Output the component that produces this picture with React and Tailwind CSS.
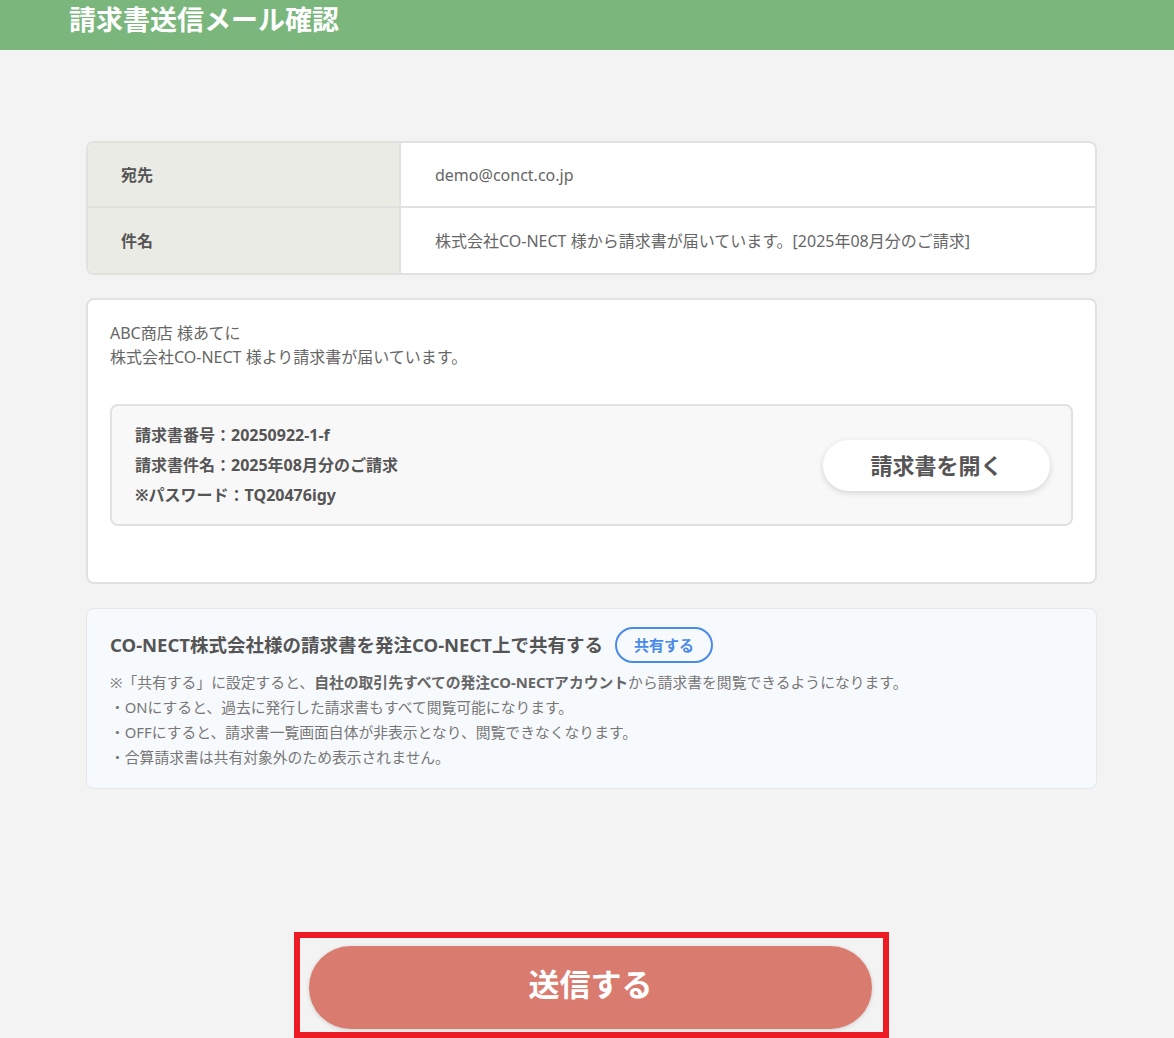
import React from "react";

const FONT = { fontFamily: '"Noto Sans", "Noto Sans CJK JP", sans-serif' };

const NOTES = [
  "・ONにすると、過去に発行した請求書もすべて閲覧可能になります。",
  "・OFFにすると、請求書一覧画面自体が非表示となり、閲覧できなくなります。",
  "・合算請求書は共有対象外のため表示されません。",
];

const App = () => {
  return (
    <div className="min-h-[1038px] bg-[#f2f3f2] text-[#666]" style={FONT}>
      {/* header */}
      <div className="h-[50px] bg-[#7bb77d] pl-[69px]">
        <h1 className="text-[27px] font-bold leading-[40px] text-white">請求書送信メール確認</h1>
      </div>

      <div className="flex flex-col pl-[86px] pr-[77px] pt-[91px]">
        {/* recipient table */}
        <div className="overflow-hidden rounded-lg border-2 border-[#dfe2df] bg-white">
          <div className="flex h-[65px] border-b-2 border-[#dfe2df]">
            <div className="flex w-[313px] items-center border-r-2 border-[#dfe2df] bg-[#ebebe6] pl-[33px] text-[16px] font-bold text-[#555]">
              宛先
            </div>
            <div className="flex items-center pl-[34px] text-[16px] text-[#666]">demo@conct.co.jp</div>
          </div>
          <div className="flex h-[65px]">
            <div className="flex w-[313px] items-center border-r-2 border-[#dfe2df] bg-[#ebebe6] pl-[33px] text-[16px] font-bold text-[#555]">
              件名
            </div>
            <div className="flex items-center pl-[34px] text-[16px] text-[#666]">
              株式会社CO-NECT 様から請求書が届いています。[2025年08月分のご請求]
            </div>
          </div>
        </div>

        {/* mail body */}
        <div className="mt-[23px] h-[286px] rounded-lg border-2 border-[#dfe2df] bg-white px-[22px] pt-[21px]">
          <p className="text-[16px] leading-[24px] text-[#666]">
            ABC商店 様あてに
            <br />
            株式会社CO-NECT 様より請求書が届いています。
          </p>
          <div className="mt-[35px] flex h-[122px] items-center justify-between rounded-lg border-2 border-[#dfe2df] bg-[#f8f8f8] pl-[23px] pr-[21px]">
            <div className="flex flex-col text-[16px] font-bold leading-[30px] text-[#555]">
              <span>請求書番号：20250922-1-f</span>
              <span>請求書件名：2025年08月分のご請求</span>
              <span>※パスワード：TQ20476igy</span>
            </div>
            <button className="h-[51px] w-[227px] rounded-full bg-white text-[22px] font-bold text-[#555] shadow-[0_2px_6px_rgba(0,0,0,0.15)]">
              請求書を開く
            </button>
          </div>
        </div>

        {/* share setting */}
        <div className="mt-[24px] h-[181px] rounded-lg border border-[#e4e8ea] bg-[#f7fafd] px-[23px] pt-[18px]">
          <div className="flex items-center gap-[12px]">
            <span className="text-[18.5px] font-bold text-[#555]">CO-NECT株式会社様の請求書を発注CO-NECT上で共有する</span>
            <span className="flex h-[36px] w-[98px] items-center justify-center rounded-full border-2 border-[#4a8ae8] text-[15px] font-bold text-[#4a8ae8]">
              共有する
            </span>
          </div>
          <div className="mt-[7px] flex flex-col text-[14.8px] leading-[25px] text-[#777]">
            <p>
              ※「共有する」に設定すると、<span className="font-bold text-[#666]">自社の取引先すべての発注CO-NECTアカウント</span>
              から請求書を閲覧できるようになります。
            </p>
            {NOTES.map((n) => (
              <p key={n}>{n}</p>
            ))}
          </div>
        </div>

        {/* submit */}
        <div className="mt-[143px] flex justify-center">
          <div className="flex w-[595px] border-[6px] border-[#ed1c24] pb-[3px] pl-[9px] pr-[11px] pt-[8px]">
            <button className="h-[83px] w-full rounded-full bg-[#d97c6f] pb-[6px] text-[31px] font-bold text-white shadow-[0_1px_4px_rgba(0,0,0,0.15)]">
              送信する
            </button>
          </div>
        </div>
      </div>
    </div>
  );
};

export default App;
